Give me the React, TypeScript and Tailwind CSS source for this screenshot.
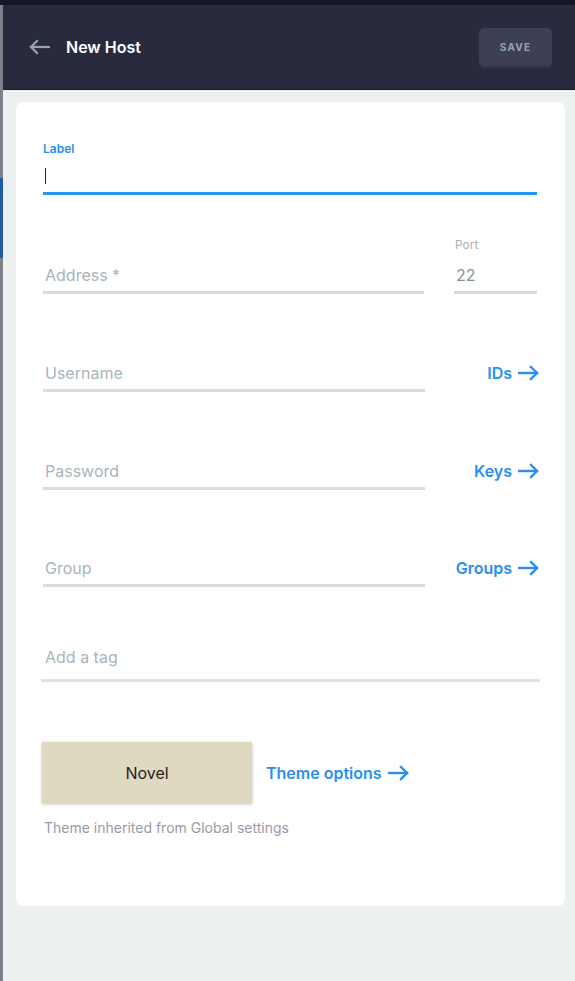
function ArrowRight() {
  return (
    <svg width="22" height="16" viewBox="0 0 22 16" fill="none" stroke="currentColor" strokeWidth="2.4" strokeLinecap="square">
      <path d="M1 8h18" />
      <path d="M13 2l6 6-6 6" />
    </svg>
  );
}

function LinkTo({ text }: { text: string }) {
  return (
    <a href="#" className="flex items-center gap-[6px] text-[16px] font-semibold text-[#2a8ef2]">
      {text}
      <ArrowRight />
    </a>
  );
}

function Row({ placeholder, link, height }: { placeholder: string; link: string; height: string }) {
  return (
    <div className={`flex items-end ${height}`}>
      <div className="w-[382px] border-b-[3px] border-[#d8dcde] pb-[6px] pl-[2px] text-[16px] leading-[20px] text-[#a8b4bc]">
        {placeholder}
      </div>
      <div className="flex flex-1 justify-end pb-[7px]">
        <LinkTo text={link} />
      </div>
    </div>
  );
}

export default function App() {
  return (
    <div className="flex h-[981px] w-[575px] flex-col overflow-hidden font-['Inter',sans-serif]">
      <div className="h-[5px] bg-[#131729]" />
      <div className="flex flex-1">
        <div className="flex w-[3px] flex-col bg-[#7e8089]">
          <div className="h-[173px]" />
          <div className="h-[80px] bg-[#1f5aa3]" />
        </div>
        <div className="flex flex-1 flex-col">
          <header className="flex h-[85px] items-center border-b border-[#191c2b] bg-[#282b3e] pl-[25px] pr-[23px]">
            <svg width="22" height="16" viewBox="0 0 22 16" fill="none" stroke="#9aa3ad" strokeWidth="2.2" strokeLinecap="square">
              <path d="M21 8H3" />
              <path d="M9 2L3 8l6 6" />
            </svg>
            <h1 className="ml-[16px] text-[16px] font-semibold text-white">New Host</h1>
            <button className="ml-auto h-[38px] w-[73px] rounded-[5px] bg-[#3d4054] text-[10px] font-bold tracking-[1.2px] text-[#98a3b6] shadow-[0_2px_0_#33364a]">
              SAVE
            </button>
          </header>
          <main className="flex-1 bg-[#ecf0f1] pl-[13px] pr-[10px] pt-[12px]">
            <div className="rounded-[7px] bg-white pb-[70px] pl-[27px] pr-[25px] pt-[40px]">
              <div className="mr-[3px]">
                <div className="text-[12px] font-semibold leading-[14px] text-[#2a8ef2]">Label</div>
                <div className="flex h-[39px] items-end border-b-[3px] border-[#2196f3] pb-[8px] pl-[2px]">
                  <div className="h-[16px] w-[1px] bg-[#222]" />
                </div>
              </div>

              <div className="mr-[3px] mt-[43px] flex gap-[30px]">
                <div className="flex flex-1 items-end border-b-[3px] border-[#d8dcde] pb-[6px] pl-[2px] text-[16px] leading-[20px] text-[#a8b4bc]">
                  Address *
                </div>
                <div className="w-[83px]">
                  <div className="pl-[1px] text-[12px] leading-[14px] text-[#a9b1b6]">Port</div>
                  <div className="flex h-[42px] items-end border-b-[3px] border-[#d8dcde] pb-[6px] pl-[2px] text-[16px] leading-[20px] text-[#8a8e92]">
                    22
                  </div>
                </div>
              </div>

              <Row placeholder="Username" link="IDs" height="h-[98px]" />
              <Row placeholder="Password" link="Keys" height="h-[98px]" />
              <Row placeholder="Group" link="Groups" height="h-[97px]" />

              <div className="-ml-[2px] flex h-[95px] items-end border-b-[3px] border-[#dfe1e2] pb-[12px] pl-[4px] text-[16px] leading-[20px] text-[#a8b4bc]">
                Add a tag
              </div>

              <div className="mt-[60px] flex items-center gap-[14px]">
                <button className="-ml-[1px] h-[61px] w-[210px] bg-[#dfd9c2] text-[16px] text-[#2a1b1b] shadow-[0_1px_3px_rgba(0,0,0,0.25)]">
                  Novel
                </button>
                <LinkTo text="Theme options" />
              </div>
              <p className="mt-[16px] pl-[1px] text-[14px] leading-[17px] text-[#9a9aa9]">Theme inherited from Global settings</p>
            </div>
          </main>
        </div>
      </div>
    </div>
  );
}
